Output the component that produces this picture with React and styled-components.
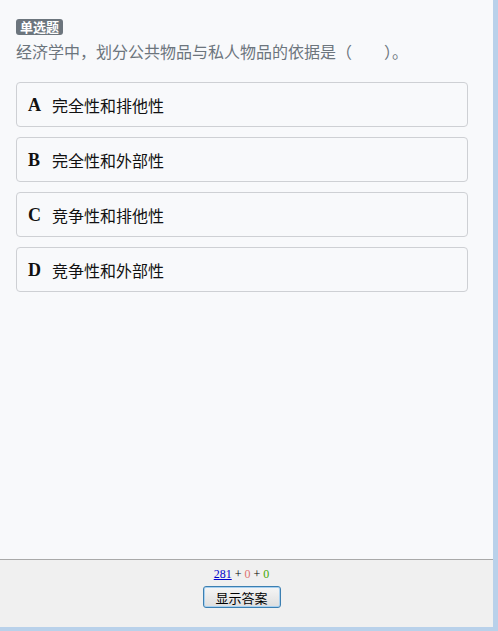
import React from "react";
import styled, { createGlobalStyle } from "styled-components";

const GlobalStyle = createGlobalStyle`
  html, body {
    margin: 0;
    padding: 0;
    height: 100%;
    background: #b9d1ea;
  }
  #root {
    height: 100%;
  }
`;

const Frame = styled.div`
  width: 493px;
  height: 627px;
  display: flex;
  flex-direction: column;
  background: #f8f9fb;
`;

const Main = styled.div`
  flex: 1;
  padding: 19px 25px 0 16px;
  font-family: "Microsoft YaHei", "Noto Sans CJK SC", "Liberation Sans", sans-serif;
`;

const Badge = styled.div`
  display: flex;
  align-items: center;
  width: fit-content;
  height: 16px;
  background: #6c757d;
  color: #fff;
  font-size: 13px;
  font-weight: bold;
  line-height: 16px;
  padding: 0 4px;
  border-radius: 3px;
`;

const Question = styled.div`
  margin-top: 4px;
  font-size: 16px;
  line-height: 24px;
  color: #6c757d;
`;

const Options = styled.div`
  margin-top: 19px;
  display: flex;
  flex-direction: column;
  gap: 10px;
`;

const Option = styled.div`
  height: 43px;
  border: 1px solid #ced0d4;
  border-radius: 4px;
  display: flex;
  align-items: center;
  padding-left: 11px;
  font-size: 16px;
  color: #111;
`;

const Letter = styled.span`
  font-family: "Liberation Serif", serif;
  font-weight: bold;
  font-size: 18px;
  width: 24px;
  padding-top: 2px;
`;

const Footer = styled.div`
  height: 68px;
  border-top: 1px solid #a9a9a9;
  background: #f0f0f0;
  display: flex;
  flex-direction: column;
  align-items: center;
  padding: 7px 10px 0 0;
  box-sizing: border-box;
`;

const Stats = styled.div`
  font-family: "Liberation Serif", serif;
  font-size: 12px;
  line-height: 14px;
  color: #000;
`;

const Count = styled.a`
  color: #0000cc;
  text-decoration: underline;
`;

const Num = styled.span`
  color: ${p => p.color};
`;

const Button = styled.button`
  margin-top: 5px;
  width: 78px;
  height: 22px;
  padding: 0;
  font-family: "Microsoft YaHei", "Noto Sans CJK SC", sans-serif;
  font-size: 13px;
  color: #000;
  background: linear-gradient(#f6f6f6, #dedede);
  border: 1px solid #3c7fb1;
  border-radius: 3px;
  box-shadow: inset 0 0 0 1px #a7d0f0;
`;

const options = [
  { key: "A", text: "完全性和排他性" },
  { key: "B", text: "完全性和外部性" },
  { key: "C", text: "竞争性和排他性" },
  { key: "D", text: "竞争性和外部性" }
];

const App = () => {
  return (
    <>
      <GlobalStyle />
      <Frame>
        <Main>
          <Badge>单选题</Badge>
          <Question>经济学中，划分公共物品与私人物品的依据是（　　）。</Question>
          <Options>
            {options.map(o => (
              <Option key={o.key}>
                <Letter>{o.key}</Letter>
                {o.text}
              </Option>
            ))}
          </Options>
        </Main>
        <Footer>
          <Stats>
            <Count href="#">281</Count> + <Num color="#e07070">0</Num> +{" "}
            <Num color="#44aa00">0</Num>
          </Stats>
          <Button>显示答案</Button>
        </Footer>
      </Frame>
    </>
  );
};

export default App;
